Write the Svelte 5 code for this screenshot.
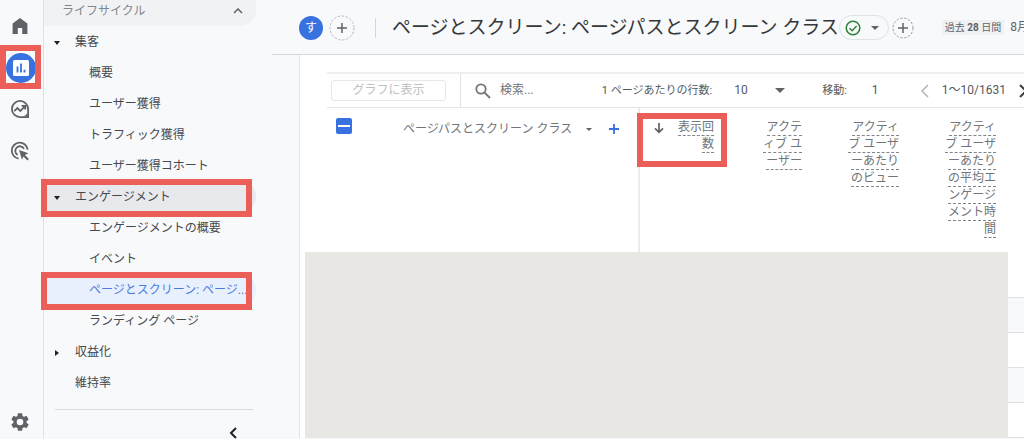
<script lang="ts">
	interface NavItem {
		label: string;
		level: number;
		caret?: 'open' | 'closed';
		active?: boolean;
		hovered?: boolean;
		marked?: boolean;
	}

	const navItems: NavItem[] = [
		{ label: '集客', level: 1, caret: 'open' },
		{ label: '概要', level: 2 },
		{ label: 'ユーザー獲得', level: 2 },
		{ label: 'トラフィック獲得', level: 2 },
		{ label: 'ユーザー獲得コホート', level: 2 },
		{ label: 'エンゲージメント', level: 1, caret: 'open', hovered: true, marked: true },
		{ label: 'エンゲージメントの概要', level: 2 },
		{ label: 'イベント', level: 2 },
		{ label: 'ページとスクリーン: ページ...', level: 2, active: true, marked: true },
		{ label: 'ランディング ページ', level: 2 },
		{ label: '収益化', level: 1, caret: 'closed' },
		{ label: '維持率', level: 1 },
	];

	const metrics = [
		{ label: '表示回数', sorted: true, marked: true },
		{ label: 'アクティブ ユーザー' },
		{ label: 'アクティブ ユーザーあたりのビュー' },
		{ label: 'アクティブ ユーザーあたりの平均エンゲージメント時間' },
	];

	let search = $state('');
	let pageSize = $state('10');
	let goTo = $state('1');
</script>

<div class="app">
	<nav class="rail" aria-label="メイン">
		<a href="#home" class="rail-link" aria-label="ホーム">
			<svg width="18" height="18" viewBox="0 0 18 18">
				<path d="M9 1 L16.4 6.6 V17 H11.2 V11 H6.8 V17 H1.6 V6.6 Z" fill="#5f6368" />
			</svg>
		</a>
		<a href="#reports" class="rail-link marked" aria-label="レポート">
			<span class="rail-active">
				<svg width="18" height="18" viewBox="0 0 18 18">
					<rect x="1" y="1" width="16" height="16" rx="1.5" fill="#fff" />
					<path d="M5.5 7.5v6M9 4.5v9M12.5 10.8v2.7" stroke="#3871e0" stroke-width="1.8" />
				</svg>
			</span>
			<span class="mark rail-mark"></span>
		</a>
		<a href="#explore" class="rail-link" aria-label="探索">
			<svg width="20" height="20" viewBox="0 0 20 20" fill="none" stroke="#5f6368" stroke-width="1.8">
				<path d="M10 1.9a8.1 8.1 0 1 0 0 16.2h8.1V10A8.1 8.1 0 0 0 10 1.9z" />
				<path d="M4.2 12.2 7.4 9l3 3 4.6-4.8M11.6 6.9h3.6v3.6" />
				<path d="M17.6 13.4a8 8 0 0 1-4.3 4.2h4.3z" fill="#5f6368" stroke="none" />
			</svg>
		</a>
		<a href="#ads" class="rail-link" aria-label="広告">
			<svg width="20" height="20" viewBox="0 0 20 20" fill="none" stroke="#5f6368" stroke-width="1.8">
				<path d="M8.6 17.6A8 8 0 1 1 17.7 8.6" />
				<path d="M7.6 13.9A4.6 4.6 0 1 1 14 7.9" />
				<path d="M9 9l9.4 3.3-3.5 1.7 4 4-1.5 1.5-4-4-1.4 3.2z" fill="#5f6368" stroke="none" />
			</svg>
		</a>
		<a href="#admin" class="rail-link rail-bottom" aria-label="管理">
			<svg width="22" height="22" viewBox="0 0 24 24" fill="#5f6368">
				<path d="M19.14 12.94c.04-.3.06-.61.06-.94s-.02-.64-.07-.94l2.03-1.58a.49.49 0 0 0 .12-.61l-1.92-3.32a.49.49 0 0 0-.59-.22l-2.39.96a7 7 0 0 0-1.62-.94l-.36-2.54A.48.48 0 0 0 13.92 2.4h-3.84a.48.48 0 0 0-.47.41l-.36 2.54a7.3 7.3 0 0 0-1.62.94l-2.39-.96a.48.48 0 0 0-.59.22L2.74 8.87a.48.48 0 0 0 .12.61l2.03 1.58a6 6 0 0 0 0 1.88l-2.03 1.58a.49.49 0 0 0-.12.61l1.92 3.32c.12.22.37.29.59.22l2.39-.96c.5.38 1.03.7 1.62.94l.36 2.54c.05.24.24.41.48.41h3.84c.24 0 .44-.17.47-.41l.36-2.54a7 7 0 0 0 1.62-.94l2.39.96c.22.08.47 0 .59-.22l1.92-3.32a.49.49 0 0 0-.12-.61zM12 15.6a3.6 3.6 0 1 1 0-7.2 3.6 3.6 0 0 1 0 7.2z" />
			</svg>
		</a>
	</nav>

	<aside class="sidenav">
		<button class="section">
			<span>ライフサイクル</span>
			<svg width="10" height="6" viewBox="0 0 10 6" fill="none" stroke="#5f6368" stroke-width="1.5">
				<path d="M1 5l4-4 4 4" />
			</svg>
		</button>
		<ul>
			{#each navItems as item}
				<li>
					<a
						href="#report"
						class="nav-link level-{item.level}"
						class:active={item.active}
						class:hovered={item.hovered}
					>
						{#if item.level === 1}
							<span class="nav-caret">
								{#if item.caret === 'open'}
									<svg width="6" height="4" viewBox="0 0 6 4"><path d="M0 0h6L3 4z" fill="#202124" /></svg>
								{:else if item.caret === 'closed'}
									<svg width="4" height="6" viewBox="0 0 4 6"><path d="M0 0v6l4-3z" fill="#202124" /></svg>
								{/if}
							</span>
						{/if}
						<span class="nav-label">{item.label}</span>
					</a>
					{#if item.marked}
						<span class="mark nav-mark"></span>
					{/if}
				</li>
			{/each}
		</ul>
		<div class="nav-footer">
			<button class="collapse" aria-label="ナビゲーションを閉じる">
				<svg width="8" height="12" viewBox="0 0 8 12" fill="none" stroke="#202124" stroke-width="2">
					<path d="M7 1L2 6l5 5" />
				</svg>
			</button>
		</div>
	</aside>

	<main>
		<header>
			<span class="avatar">す</span>
			<button class="add" aria-label="比較を追加">
				<svg width="26" height="26" viewBox="0 0 26 26" fill="none">
					<circle cx="13" cy="13" r="12" stroke="#b4b7bb" stroke-dasharray="2.4 1.6" />
					<path d="M8 13h10M13 8v10" stroke="#5f6368" stroke-width="1.5" />
				</svg>
			</button>
			<span class="divider"></span>
			<h1>ページとスクリーン: ページパスとスクリーン クラス</h1>
			<button class="status" aria-label="データの品質">
				<svg width="16" height="16" viewBox="0 0 16 16" fill="none" stroke="#2b8138" stroke-width="1.5">
					<circle cx="8" cy="8" r="6.8" />
					<path d="M4.6 8.2l2.5 2.5 4.5-4.8" />
				</svg>
				<svg width="8" height="4" viewBox="0 0 8 4"><path d="M0 0h8L4 4z" fill="#5f6368" /></svg>
			</button>
			<button class="add small" aria-label="フィルタを追加">
				<svg width="22" height="22" viewBox="0 0 22 22" fill="none">
					<circle cx="11" cy="11" r="10" stroke="#9a9da2" stroke-dasharray="2.4 1.6" />
					<path d="M6 11h10M11 6v10" stroke="#5f6368" stroke-width="1.5" />
				</svg>
			</button>
			<button class="period"><span class="period-chip">過去 <b>28</b> 日間</span> 8月</button>
		</header>

		<section class="card">
			<div class="toolbar">
				<div class="plot">
					<button class="plot-button" disabled>グラフに表示</button>
				</div>
				<label class="search">
					<svg width="16" height="16" viewBox="0 0 16 16" fill="none" stroke="#70757a" stroke-width="1.8">
						<circle cx="6" cy="6" r="4.7" />
						<path d="M9.6 9.6l5.4 5.4" />
					</svg>
					<input type="text" placeholder="検索..." aria-label="検索" bind:value={search} />
				</label>
				<label class="page-size">
					<span class="caption">1 ページあたりの行数:</span>
					<span class="select-wrap">
						<select bind:value={pageSize}>
							<option value="10">10</option>
							<option value="25">25</option>
							<option value="50">50</option>
						</select>
						<svg width="10" height="5" viewBox="0 0 10 5"><path d="M0 0h10L5 5z" fill="#5f6368" /></svg>
					</span>
				</label>
				<label class="go-to">
					<span class="caption">移動:</span>
					<input type="text" bind:value={goTo} />
				</label>
				<div class="pager">
					<button aria-label="前へ" disabled>
						<svg width="8" height="14" viewBox="0 0 8 14" fill="none" stroke="#b0b3b8" stroke-width="1.5">
							<path d="M7 1L1 7l6 6" />
						</svg>
					</button>
					<span>1〜10/1631</span>
					<button aria-label="次へ">
						<svg width="8" height="14" viewBox="0 0 8 14" fill="none" stroke="#3c4043" stroke-width="2">
							<path d="M1 1l6 6-6 6" />
						</svg>
					</button>
				</div>
			</div>

			<div class="table-wrap">
				<table>
					<colgroup>
						<col class="col-dimension" />
						<col class="col-metric" />
						<col class="col-metric" />
						<col class="col-wide" />
						<col class="col-wide" />
						<col />
					</colgroup>
					<thead>
						<tr>
							<th class="dimension">
								<div class="dimension-row">
									<input type="checkbox" indeterminate={true} aria-label="すべての行を選択" />
									<button class="dimension-name">
										<span>ページパスとスクリーン クラス</span>
										<svg width="6" height="3" viewBox="0 0 6 3"><path d="M0 0h6L3 3z" fill="#5f6368" /></svg>
									</button>
									<button class="add-dimension" aria-label="ディメンションを追加">
										<svg width="10" height="10" viewBox="0 0 10 10" stroke="#3871e0" stroke-width="1.8">
											<path d="M5 0v10M0 5h10" />
										</svg>
									</button>
								</div>
							</th>
							{#each metrics as metric}
								<th class="metric">
									<div class="metric-head">
										{#if metric.sorted}
											<svg class="sort" width="10" height="12" viewBox="0 0 10 12" fill="none" stroke="#5f6368" stroke-width="1.7">
												<path d="M5 1v9M1 6.3l4 4 4-4" />
											</svg>
										{/if}
										<div class="metric-label"><span>{metric.label}</span></div>
									</div>
									{#if metric.marked}
										<span class="mark metric-mark"></span>
									{/if}
								</th>
							{/each}
							<td></td>
						</tr>
					</thead>
					<tbody>
						<tr class="totals"><td colspan="6"></td></tr>
						{#each Array(4) as _}
							<tr><td colspan="6"></td></tr>
						{/each}
					</tbody>
				</table>
				<div class="cover"></div>
			</div>
		</section>
	</main>
</div>

<style>
	:global(body) {
		margin: 0;
		background: #fff;
	}
	.app {
		display: flex;
		overflow: hidden;
		background: #f8f9fb;
		color: #45484c;
		font-family: Roboto, 'Noto Sans CJK JP', sans-serif;
		font-size: 12px;
		line-height: 17px;
	}
	button,
	input,
	select {
		margin: 0;
		padding: 0;
		border: none;
		background: none;
		color: inherit;
		font: inherit;
	}
	a {
		color: inherit;
		text-decoration: none;
	}
	svg {
		display: block;
		flex-shrink: 0;
	}

	/* red call-out frames */
	.mark {
		position: absolute;
		z-index: 2;
		box-sizing: border-box;
		border: 6px solid #ec5f59;
		pointer-events: none;
	}
	.rail-mark {
		inset: -2px 2px -1px 0;
	}
	.nav-mark {
		top: -2px;
		left: -3px;
		right: 4px;
		height: 38px;
	}
	.metric-mark {
		top: 5px;
		left: -3px;
		right: 0;
		height: 54px;
	}

	/* icon rail */
	.rail {
		display: flex;
		flex-direction: column;
		flex-shrink: 0;
		width: 43px;
		padding-top: 5px;
		border-right: 1px solid #dfe1e4;
	}
	.rail-link {
		display: flex;
		align-items: center;
		justify-content: center;
		height: 42px;
		padding-right: 4px;
	}
	.rail-link.marked {
		position: relative;
		height: 41px;
		padding-right: 2px;
	}
	.rail-active {
		display: flex;
		align-items: center;
		justify-content: center;
		width: 30px;
		height: 30px;
		border-radius: 50%;
		background: #3871e0;
		box-shadow: 0 0 0 2px #fff;
	}
	.rail-bottom {
		height: 34px;
		margin-top: auto;
	}

	/* report navigation */
	.sidenav {
		flex-shrink: 0;
		width: 212px;
		padding-right: 16px;
	}
	.section {
		display: flex;
		align-items: center;
		justify-content: space-between;
		box-sizing: border-box;
		width: 100%;
		height: 26px;
		padding: 0 13px 4px 18px;
		border-radius: 0 0 16px 0;
		background: #f1f2f4;
		color: #80868b;
	}
	ul {
		margin: 0;
		padding: 0;
		list-style: none;
	}
	li {
		position: relative;
	}
	.nav-link {
		display: flex;
		align-items: center;
		box-sizing: border-box;
		height: 31px;
		padding-top: 2px;
		border-radius: 0 16px 16px 0;
	}
	.nav-link.level-2 {
		padding-left: 45px;
	}
	.nav-link.hovered {
		background: #e8e9ed;
	}
	.nav-link.active {
		background: #e8f0fd;
		color: #4a7be0;
	}
	.nav-caret {
		display: flex;
		justify-content: center;
		flex-shrink: 0;
		width: 26px;
		margin-right: 5px;
	}
	.nav-label {
		white-space: nowrap;
	}
	.nav-footer {
		display: flex;
		justify-content: flex-end;
		margin: 11px 3px 0 11px;
		padding: 17px 16px 0 0;
		border-top: 1px solid #dadce0;
	}

	/* report header */
	main {
		flex: 1;
		min-width: 0;
	}
	header {
		display: flex;
		align-items: center;
		box-sizing: border-box;
		height: 55px;
		padding: 1px 0 0 27px;
		overflow: hidden;
		border-bottom: 1px solid #d5d7da;
	}
	.avatar {
		flex-shrink: 0;
		width: 24px;
		border-radius: 50%;
		background: #3871e0;
		color: #fff;
		line-height: 24px;
		text-align: center;
	}
	.add {
		flex-shrink: 0;
		margin-left: 6px;
	}
	.add.small {
		margin-left: 3px;
	}
	.divider {
		flex-shrink: 0;
		width: 1px;
		height: 20px;
		margin-left: 20px;
		background: #d5d7da;
	}
	h1 {
		margin: 0 0 0 16px;
		color: #35383b;
		font-size: 19px;
		font-weight: 400;
		line-height: 26px;
		white-space: nowrap;
	}
	.status {
		display: flex;
		align-items: center;
		flex-shrink: 0;
		gap: 10px;
		height: 25px;
		padding: 0 9px 0 5px;
		border: 1px solid #e0e2e5;
		border-radius: 13px;
	}
	.period {
		margin-left: 28px;
		color: #5f6368;
		white-space: nowrap;
	}
	.period-chip {
		display: inline-block;
		margin-right: 3px;
		padding: 0 3px;
		background: #f0f1f3;
		font-size: 10px;
		line-height: 15px;
	}

	/* table card */
	.card {
		margin-left: 27px;
		padding: 17px 0 0 27px;
		border-left: 1px solid #e3e5e8;
		background: #fff;
	}
	.toolbar {
		display: flex;
		align-items: center;
		height: 33px;
		overflow: hidden;
		border-top: 2px solid #eeeff1;
		border-bottom: 1px solid #e3e5e8;
		color: #55595e;
		white-space: nowrap;
	}
	.plot {
		display: flex;
		align-items: center;
		flex-shrink: 0;
		height: 100%;
		padding: 0 14px 0 4px;
		border-right: 1px solid #dfe1e4;
	}
	.plot-button {
		width: 115px;
		height: 21px;
		border: 1px solid #e6e7e9;
		border-radius: 3px;
		color: #bcbfc2;
	}
	.search {
		display: flex;
		align-items: center;
		flex: 1;
		min-width: 80px;
		gap: 9px;
		padding-left: 14px;
	}
	.search input {
		width: 100%;
		min-width: 0;
		outline: none;
	}
	.search input::placeholder {
		color: #70757a;
		opacity: 1;
	}
	.caption {
		font-size: 11px;
	}
	.page-size {
		display: flex;
		align-items: center;
		gap: 22px;
	}
	.select-wrap {
		display: flex;
		align-items: center;
	}
	select {
		width: 41px;
		appearance: none;
	}
	.go-to {
		display: flex;
		align-items: center;
		gap: 25px;
		margin-left: 37px;
	}
	.go-to input {
		width: 26px;
	}
	.pager {
		display: flex;
		align-items: center;
		gap: 13px;
		margin: 0 -3px 0 23px;
	}
	.table-wrap {
		position: relative;
	}
	table {
		width: 100%;
		border-collapse: collapse;
		table-layout: fixed;
	}
	.col-dimension {
		width: 312px;
	}
	.col-metric {
		width: 88px;
	}
	.col-wide {
		width: 97px;
	}
	th,
	td {
		padding: 0;
		font-weight: 400;
		vertical-align: top;
	}
	.dimension {
		border-right: 2px solid #eaebed;
	}
	.dimension-row {
		display: flex;
		align-items: center;
		padding: 10px 0 0 9px;
		color: #70757a;
	}
	input[type='checkbox'] {
		display: flex;
		align-items: center;
		justify-content: center;
		width: 16px;
		height: 16px;
		margin-bottom: 6px;
		border-radius: 2px;
		background: #3871e0;
		appearance: none;
	}
	input[type='checkbox']::before {
		content: '';
		width: 12px;
		height: 2px;
		background: #fff;
	}
	.dimension-name {
		display: flex;
		align-items: center;
		gap: 14px;
		margin-left: 51px;
	}
	.add-dimension {
		margin-left: 17px;
	}
	.metric {
		position: relative;
	}
	.metric-head {
		display: flex;
		justify-content: flex-end;
		padding: 11px 13px 14px 14px;
		color: #70757a;
	}
	.sort {
		margin: 3px auto 0 0;
	}
	.metric-label {
		max-width: 52px;
		line-break: anywhere;
		text-align: right;
	}
	.sort + .metric-label {
		width: 38px;
	}
	.metric:nth-child(3) .metric-label {
		width: 41px;
	}
	.metric-label span {
		padding-bottom: 1px;
		border-bottom: 1px dashed #80868b;
	}
	tbody td {
		height: 34px;
		border-bottom: 1px solid #dfe1e4;
	}
	.totals td {
		height: 45px;
	}
	tbody tr:nth-child(even) {
		background: #f8f9fb;
	}
	.cover {
		position: absolute;
		inset: 144px 16px 0 -22px;
		background: #e8e7e3;
	}
</style>
